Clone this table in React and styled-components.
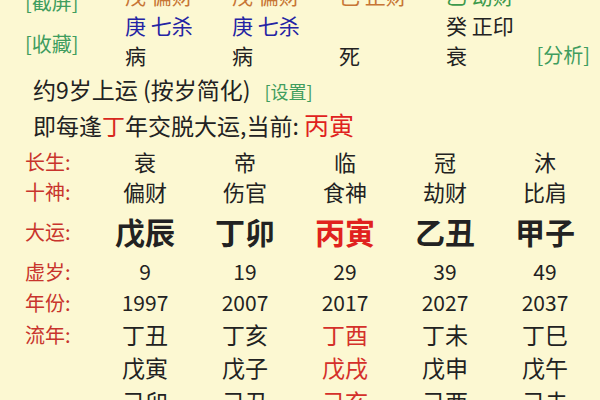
import React from 'react';
import styled, {createGlobalStyle} from "styled-components";

const GlobalStyle = createGlobalStyle`
  html, body {
    margin: 0;
    padding: 0;
    background: #fcf8d2;
    overflow: hidden;
  }
  body {
    font-family: "Noto Sans CJK SC", "Noto Sans", sans-serif;
    color: #222;
  }
`;

const Page = styled.div`
  width: 600px;
  height: 420px;
  margin-top: -20px;
  padding-left: 25px;
  box-sizing: border-box;
  background: #fcf8d2;
`;

const Top = styled.div`
  display: flex;
`;

const SideCol = styled.div`
  width: 100px;
  flex-shrink: 0;
  display: flex;
  flex-direction: column;
  gap: 18px;
  padding-top: 10px;
`;

const Link = styled.span`
  color: #3f9d5e;
  font-size: 20px;
  line-height: 24px;
  white-space: nowrap;
`;

const AnalyzeLink = styled(Link)`
  justify-self: end;
`;

const PillarGrid = styled.div`
  flex: 1;
  display: grid;
  grid-template-columns: 107px 107px 107px 1fr auto;
  grid-auto-rows: 30px;
  padding-right: 10px;
  align-items: center;
`;

const Cell = styled.span`
  font-size: 21px;
  line-height: 30px;
  white-space: nowrap;
  color: ${p => p.$color || "#222"};
`;

const Note = styled.div`
  font-size: 23px;
  line-height: 35px;
  padding-left: 8px;
  margin-top: ${p => p.$mt || 0}px;
  white-space: nowrap;
`;

const Small = styled(Link)`
  font-size: 18px;
  margin-left: 14px;
`;

const Red = styled.span`
  color: ${p => p.$bright ? "#e0221e" : "#d8281e"};
  font-size: ${p => p.$size || 23}px;
`;

const Table = styled.div`
  margin-top: 2px;
`;

const Row = styled.div`
  display: grid;
  grid-template-columns: 70px repeat(5, 100px);
  height: ${p => p.$h}px;
  align-items: center;
`;

const Label = styled.span`
  color: #c8342c;
  font-size: 20px;
  white-space: nowrap;
`;

const Value = styled.span`
  text-align: center;
  font-size: ${p => p.$size}px;
  font-weight: ${p => p.$bold ? 700 : 400};
  color: ${p => p.$red ? (p.$bold ? "#e0221e" : "#d4302a") : "#222"};
  white-space: nowrap;
`;

const rows = [
    {label: "长生:", h: 30, size: 22, vals: ["衰", "帝", "临", "冠", "沐"]},
    {label: "十神:", h: 32, size: 22, vals: ["偏财", "伤官", "食神", "劫财", "比肩"]},
    {label: "大运:", h: 48, size: 30, bold: true, red: 2, vals: ["戊辰", "丁卯", "丙寅", "乙丑", "甲子"]},
    {label: "虚岁:", h: 32, size: 21, vals: ["9", "19", "29", "39", "49"]},
    {label: "年份:", h: 30, size: 21, vals: ["1997", "2007", "2017", "2027", "2037"]},
    {label: "流年:", h: 32, size: 23, red: 2, vals: ["丁丑", "丁亥", "丁酉", "丁未", "丁巳"]},
    {label: "", h: 35, size: 23, red: 2, vals: ["戊寅", "戊子", "戊戌", "戊申", "戊午"]},
    {label: "", h: 34, size: 23, red: 2, vals: ["己卯", "己丑", "己亥", "己酉", "己未"]},
];

const orange = "#c77636";
const blue = "#2424a4";
const green = "#3c9a4c";

const App = () => {
    return (
        <>
            <GlobalStyle/>
            <Page>
                <Top>
                    <SideCol>
                        <Link>[截屏]</Link>
                        <Link>[收藏]</Link>
                    </SideCol>
                    <PillarGrid>
                        <Cell $color={orange}>戊 偏财</Cell>
                        <Cell $color={orange}>戊 偏财</Cell>
                        <Cell $color={orange}>己 正财</Cell>
                        <Cell $color={green}>乙 劫财</Cell>
                        <Cell/>

                        <Cell $color={blue}>庚 七杀</Cell>
                        <Cell $color={blue}>庚 七杀</Cell>
                        <Cell/>
                        <Cell>癸 正印</Cell>
                        <Cell/>

                        <Cell>病</Cell>
                        <Cell>病</Cell>
                        <Cell>死</Cell>
                        <Cell>衰</Cell>
                        <AnalyzeLink>[分析]</AnalyzeLink>
                    </PillarGrid>
                </Top>
                <Note $mt={2}>约9岁上运 (按岁简化)<Small>[设置]</Small></Note>
                <Note>即每逢<Red>丁</Red>年交脱大运,当前: <Red $bright $size={25}>丙寅</Red></Note>
                <Table>
                    {rows.map(r => (
                        <Row key={r.vals[0]} $h={r.h}>
                            <Label>{r.label}</Label>
                            {r.vals.map((v, i) => (
                                <Value key={i} $size={r.size} $bold={r.bold} $red={r.red === i}>{v}</Value>
                            ))}
                        </Row>
                    ))}
                </Table>
            </Page>
        </>
    );
};

export default App;
